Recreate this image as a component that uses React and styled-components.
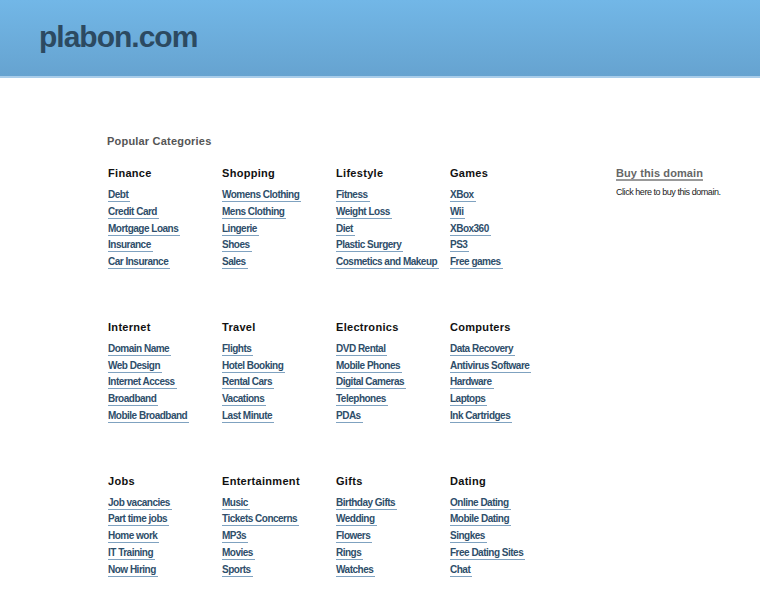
import React from "react";
import styled, { createGlobalStyle } from "styled-components";

const GlobalStyle = createGlobalStyle`
  body {
    margin: 0;
    background: #fff;
    font-family: "Liberation Sans", Arial, sans-serif;
  }
`;

const Header = styled.div`
  height: 76px;
  background: linear-gradient(to bottom, #72b7e7 0%, #66a3d0 100%);
  border-bottom: 2px solid #a9cdea;
  display: flex;
  align-items: center;
  padding-left: 39px;
`;

const Logo = styled.h1`
  margin: 0 0 2px 0;
  font-size: 30px;
  font-weight: bold;
  letter-spacing: -1px;
  color: #2c4a61;
`;

const Main = styled.div`
  display: flex;
  padding: 57px 0 0 107px;
`;

const Categories = styled.div`
  width: 509px;
`;

const Title = styled.h2`
  margin: 0 0 19px 0;
  font-size: 11px;
  font-weight: bold;
  letter-spacing: 0.2px;
  color: #555;
`;

const Grid = styled.div`
  display: grid;
  grid-template-columns: repeat(4, 114px);
  row-gap: 47px;
  padding-left: 1px;
`;

const Column = styled.div`
  display: flex;
  flex-direction: column;
  align-items: flex-start;
`;

const Heading = styled.h3`
  margin: 0 0 9px 0;
  font-size: 11px;
  font-weight: bold;
  letter-spacing: 0.3px;
  line-height: 14px;
  color: #111;
`;

const Link = styled.a`
  font-size: 10px;
  font-weight: bold;
  letter-spacing: -0.5px;
  line-height: 12px;
  color: #2e4e6a;
  text-decoration: none;
  border-bottom: 1px solid #7fa2c0;
  padding-right: 2px;
  margin-bottom: 3.75px;
  cursor: pointer;
`;

const Aside = styled.div`
  padding-top: 28px;
`;

const BuyLink = styled.a`
  display: inline-block;
  font-size: 11px;
  font-weight: bold;
  letter-spacing: 0.1px;
  color: #666;
  text-decoration: none;
  border-bottom: 2px solid #999;
  line-height: 12px;
  cursor: pointer;
`;

const BuyText = styled.p`
  margin: 6px 0 0 0;
  font-size: 9px;
  letter-spacing: -0.45px;
  color: #222;
`;

const groups = [
  ["Finance", ["Debt", "Credit Card", "Mortgage Loans", "Insurance", "Car Insurance"]],
  ["Shopping", ["Womens Clothing", "Mens Clothing", "Lingerie", "Shoes", "Sales"]],
  ["Lifestyle", ["Fitness", "Weight Loss", "Diet", "Plastic Surgery", "Cosmetics and Makeup"]],
  ["Games", ["XBox", "Wii", "XBox360", "PS3", "Free games"]],
  ["Internet", ["Domain Name", "Web Design", "Internet Access", "Broadband", "Mobile Broadband"]],
  ["Travel", ["Flights", "Hotel Booking", "Rental Cars", "Vacations", "Last Minute"]],
  ["Electronics", ["DVD Rental", "Mobile Phones", "Digital Cameras", "Telephones", "PDAs"]],
  ["Computers", ["Data Recovery", "Antivirus Software", "Hardware", "Laptops", "Ink Cartridges"]],
  ["Jobs", ["Job vacancies", "Part time jobs", "Home work", "IT Training", "Now Hiring"]],
  ["Entertainment", ["Music", "Tickets Concerns", "MP3s", "Movies", "Sports"]],
  ["Gifts", ["Birthday Gifts", "Wedding", "Flowers", "Rings", "Watches"]],
  ["Dating", ["Online Dating", "Mobile Dating", "Singkes", "Free Dating Sites", "Chat"]],
];

const App = () => {
  return (
    <>
      <GlobalStyle />
      <Header>
        <Logo>plabon.com</Logo>
      </Header>
      <Main>
        <Categories>
          <Title>Popular Categories</Title>
          <Grid>
            {groups.map(([name, links]) => (
              <Column key={name}>
                <Heading>{name}</Heading>
                {links.map((l) => (
                  <Link key={l}>{l}</Link>
                ))}
              </Column>
            ))}
          </Grid>
        </Categories>
        <Aside>
          <BuyLink>Buy this domain</BuyLink>
          <BuyText>Click here to buy this domain.</BuyText>
        </Aside>
      </Main>
    </>
  );
};

export default App;
